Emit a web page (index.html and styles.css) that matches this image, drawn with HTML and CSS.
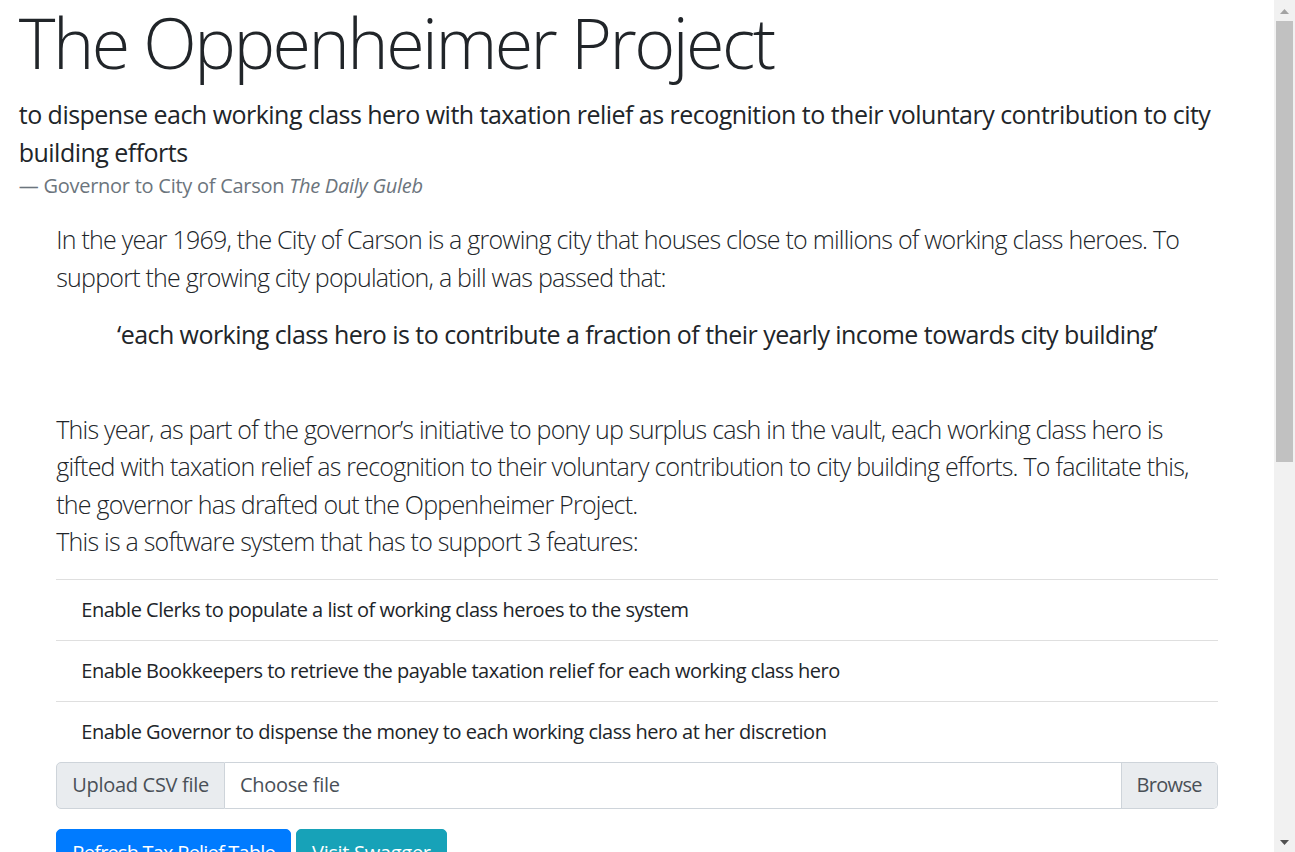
FILE: index.html
```html
<!DOCTYPE html>
<html lang="en">
<head>
<meta charset="utf-8">
<title>The Oppenheimer Project</title>
<link rel="stylesheet" href="styles.css">
</head>
<body>
<div class="page">
  <h1 class="title">The Oppenheimer Project</h1>
  <blockquote class="motto">
    <p>to dispense each working class hero with taxation relief as recognition to their voluntary contribution to city building efforts</p>
    <footer class="motto-footer">— Governor to City of Carson <cite>The Daily Guleb</cite></footer>
  </blockquote>

  <section class="content">
    <p class="lead">In the year 1969, the City of Carson is a growing city that houses close to millions of working class heroes. To support the growing city population, a bill was passed that:</p>
    <p class="bill">‘each working class hero is to contribute a fraction of their yearly income towards city building’</p>
    <p class="lead lead-last">This year, as part of the governor’s initiative to pony up surplus cash in the vault, each working class hero is gifted with taxation relief as recognition to their voluntary contribution to city building efforts. To facilitate this, the governor has drafted out the Oppenheimer Project.<br>This is a software system that has to support 3 features:</p>

    <ul class="features">
      <li>Enable Clerks to populate a list of working class heroes to the system</li>
      <li>Enable Bookkeepers to retrieve the payable taxation relief for each working class hero</li>
      <li>Enable Governor to dispense the money to each working class hero at her discretion</li>
    </ul>

    <div class="upload">
      <span class="upload-label">Upload CSV file</span>
      <label class="file-field">
        <input class="file-input" type="file" accept=".csv">
        <span class="file-name">Choose file</span>
        <span class="browse">Browse</span>
      </label>
    </div>

    <div class="actions">
      <button class="btn btn-primary" type="button">Refresh Tax Relief Table</button>
      <button class="btn btn-info" type="button">Visit Swagger</button>
    </div>

    <table class="relief-table">
      <thead>
        <tr><th>#</th><th>NatID</th><th>Name</th><th>Relief</th></tr>
      </thead>
      <tbody>
        <tr><td colspan="4" class="empty">No records yet</td></tr>
      </tbody>
    </table>
  </section>
</div>

<div class="scrollbar" aria-hidden="true">
  <div class="scroll-btn">
    <svg width="21" height="21" viewBox="0 0 21 21"><polygon points="6,14 15,14 10.5,9" fill="#a3a3a3"/></svg>
  </div>
  <div class="scroll-track">
    <div class="scroll-thumb"></div>
  </div>
  <div class="scroll-btn">
    <svg width="21" height="21" viewBox="0 0 21 21"><polygon points="6,9 15,9 10.5,14" fill="#505050"/></svg>
  </div>
</div>
</body>
</html>
```

FILE: styles.css
```css
html {
  font-size: 20px;
}

body {
  margin: 0 21px 0 0;
  font-family: "Open Sans", "Noto Sans", "Liberation Sans", sans-serif;
  font-size: 20px;
  line-height: 1.5;
  letter-spacing: -0.024em;
  color: #212529;
  background: #fff;
}

/* simulated window scrollbar */
.scrollbar {
  position: fixed;
  top: 0;
  right: 0;
  bottom: 0;
  width: 21px;
  display: flex;
  flex-direction: column;
  background: #f1f1f1;
}
.scroll-btn {
  height: 21px;
  flex: none;
}
.scroll-btn svg {
  display: block;
}
.scroll-track {
  flex: 1;
}
.scroll-thumb {
  height: 441px;
  margin: 0 2px;
  background: #c1c1c1;
}

.page {
  padding: 0 18.75px;
}

.title {
  margin: 0 0 12px;
  font-size: 70px;
  font-weight: 300;
  line-height: 1.2;
  letter-spacing: -0.036em;
}

.motto {
  margin: 0 0 20px;
  font-size: 25px;
  letter-spacing: -0.021em;
}
.motto p {
  margin: 0;
}
.motto-footer {
  display: block;
  font-size: 20px;
  letter-spacing: -0.013em;
  color: #6c757d;
}
.motto-footer cite {
  font-style: italic;
}

.content {
  margin: 0 37.5px;
  padding-bottom: 700px;
}

.lead {
  margin: 0 0 20px;
  font-size: 25px;
  font-weight: 300;
  line-height: 1.5;
  letter-spacing: -0.031em;
}
.lead-last {
  margin-bottom: 18px;
}

.bill {
  margin: 0 0 57px;
  font-size: 25px;
  letter-spacing: -0.022em;
  text-align: center;
}

.features {
  list-style: none;
  margin: 0;
  padding: 0;
}
.features li {
  padding: 15px 25px;
  border-top: 1px solid rgba(0, 0, 0, 0.125);
}

.upload {
  display: flex;
  height: 47.5px;
  margin-bottom: 20px;
  color: #495057;
  letter-spacing: -0.015em;
}
.upload-label {
  display: flex;
  align-items: center;
  padding: 0 15px;
  background: #e9ecef;
  border: 1px solid #ced4da;
  border-radius: 5px 0 0 5px;
}
.file-field {
  flex: 1;
  display: flex;
  border: 1px solid #ced4da;
  border-left: 0;
  border-radius: 0 5px 5px 0;
  overflow: hidden;
  cursor: pointer;
}
.file-input {
  display: none;
}
.file-name {
  flex: 1;
  display: flex;
  align-items: center;
  padding: 0 15px;
}
.browse {
  display: flex;
  align-items: center;
  padding: 0 15px;
  background: #e9ecef;
  border-left: 1px solid #ced4da;
  letter-spacing: -0.035em;
}

.actions {
  display: flex;
  gap: 5px;
  margin-bottom: 20px;
}
.btn {
  font: inherit;
  font-size: 20px;
  line-height: 30px;
  letter-spacing: -0.015em;
  padding: 7.5px 15px;
  border: 1px solid transparent;
  border-radius: 5px;
  color: #fff;
  cursor: pointer;
}
.btn-primary {
  background: #007bff;
  border-color: #007bff;
  letter-spacing: -0.04em;
}
.btn-info {
  background: #17a2b8;
  border-color: #17a2b8;
}

.relief-table {
  width: 100%;
  border-collapse: collapse;
}
.relief-table th,
.relief-table td {
  padding: 15px;
  border-top: 1px solid #dee2e6;
  text-align: left;
}
.relief-table th {
  border-bottom: 2px solid #dee2e6;
}
.relief-table .empty {
  color: #6c757d;
}
```
